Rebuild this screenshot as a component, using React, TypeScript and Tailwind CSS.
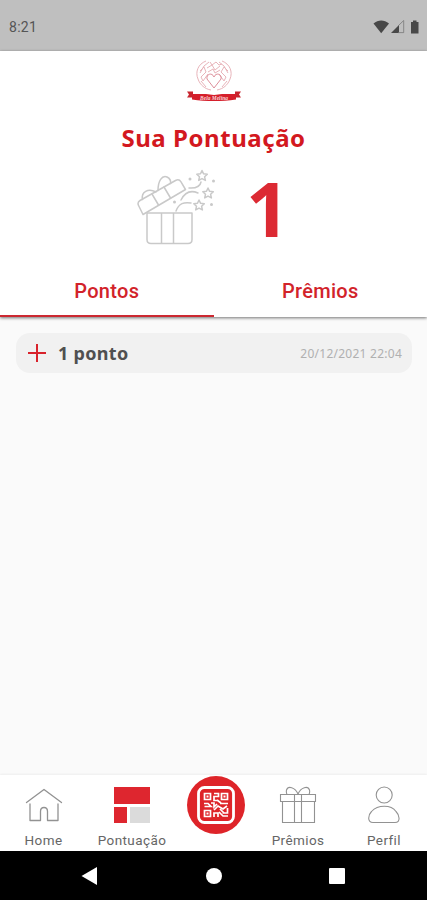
import React, { useState } from 'react';

const tabs = ['Pontos', 'Prêmios'];

const entries = [{ id: 1, label: '1 ponto', date: '20/12/2021 22:04' }];

function StatusBar() {
  return (
    <div className="h-[51px] bg-[#bfbfbf] flex items-center justify-between pl-[9px] pr-[6px] pt-[3px] text-[#555]">
      <span className="text-[14px] tracking-[0.3px] font-[Roboto,sans-serif]">8:21</span>
      <svg width="48" height="16" viewBox="0 0 48 16" fill="#484848">
        <path d="M0.5 4.6C5.2 0.6 11.2 0.6 16 4.6L8.2 14.2z" />
        <path d="M18 14L26 6V14z" />
        <path d="M25 7L30.700 1.500V13.600H25" fill="none" stroke="#777" strokeWidth="0.8" />
        <path d="M38 3h2V1.500h3.500V3h2v11.500H38z" />
      </svg>
    </div>
  );
}

function Logo() {
  return (
    <svg className="mt-[7px]" width="58" height="45" viewBox="0 0 58 45" fill="none">
      <g stroke="#e8b4ba" strokeWidth="1">
        <path d="M21 3C13 6 10 14 13 21C15 27 20 31 26 32" />
        <path d="M37 3C45 6 48 14 45 21C43 27 38 31 32 32" />
        <path d="M24 4l-5 4-4 7M34 4l5 4 4 7M25 4l2 3 4-3 3 3 3-1" />
        <path d="M15 13l4-4 2 5-5 5 2 4 5-7M43 13l-4-4-3 5 5 5-2 4-5-7" />
        <path d="M22 10l5-3 3 5 5-4M23 14l5-3 2 4 5-3M16 23l5 6M42 23l-5 6" />
      </g>
      <path d="M29 19C27 14 21 16 22 21L29 30L36 21C37 16 31 14 29 19z" stroke="#dd8f9a" />
      <path d="M2 33.500h6v6H2l2-3zM56 33.500h-6v6h6l-2-3z" fill="#c8252e" />
      <path d="M7 36h14l8 1 8-1h14v5.500C44 42.500 36 43 29 43S14 42.500 7 41.500z" fill="#d51f2b" />
      <text x="29" y="41.500" textAnchor="middle" fill="#f9d6d8" className="text-[5.5px] italic font-bold font-[Liberation_Serif,serif]">Bela Melina</text>
    </svg>
  );
}

function OpenGift() {
  return (
    <svg width="80" height="80" viewBox="0 0 80 80" fill="none" stroke="#c9c9c9" strokeWidth="1.5" strokeLinejoin="round" strokeLinecap="round">
      <path d="M11 45h45v26.500q0 4-4 4H15q-4 0-4-4zM25.500 45v30.500M37.500 45v30.500" />
      <path d="M2.800 38Q0.800 34.500 4 32.500L39.500 12.500Q43 10.500 45 13.800L49.500 21.500L7 46.500z" />
      <path d="M16 26L22.500 37M28 19L34.500 30" />
      <path d="M6.500 31.500C5 24 12 20 20 24M22 22.500C22 13 26 7 31 9C35 11 35 13 34.500 15.500" />
      <path d="M40 43C43 35 48 34 55 35M45 32C49 24 55 22 62 25M53 20C60 20.500 64 19 65 14" />
      <path d="M66 2.500l1.600 3.300 3.700.5-2.700 2.500.8 3.600-3.400-1.800-3.300 1.800.8-3.600-2.700-2.500 3.700-.5z" />
      <path d="M72 20l1.600 3.300 3.700.5-2.700 2.500.8 3.600-3.400-1.800-3.300 1.800.8-3.600-2.700-2.500 3.700-.5z" />
      <path d="M63 32l1.600 3.300 3.700.5-2.700 2.500.8 3.600-3.400-1.800-3.300 1.800.8-3.600-2.700-2.500 3.700-.5z" />
      <g fill="#c9c9c9" stroke="none">
        <circle cx="54" cy="11" r="1.500" />
        <circle cx="77.500" cy="13" r="1.500" />
        <circle cx="38.500" cy="34" r="1.500" />
        <circle cx="75.500" cy="36.500" r="1.500" />
      </g>
    </svg>
  );
}

function HomeIcon() {
  return (
    <svg width="38" height="38" viewBox="0 0 38 38" fill="none" stroke="#929292" strokeWidth="1.300" strokeLinejoin="round" strokeLinecap="round">
      <path d="M1.500 16.500L19 3.500L36.500 16.500" />
      <path d="M5 18v16.500h10.500V25.500q0-4 3.500-4t3.500 4v9H33V18" />
    </svg>
  );
}

function PointsIcon() {
  return (
    <div className="w-9 h-9 grid grid-cols-[13px_20px] grid-rows-[17px_16px] gap-[3px]">
      <div className="col-span-2 bg-[#de262f]" />
      <div className="bg-[#de262f]" />
      <div className="bg-[#dbdbdb]" />
    </div>
  );
}

function GiftIcon() {
  return (
    <svg width="38" height="38" viewBox="0 0 38 38" fill="none" stroke="#929292" strokeWidth="1.100">
      <path d="M1.500 8.500h35v7h-35zM3.500 15.500v21h32v-21M15.500 8.500v28M22.500 8.500v28" />
      <path d="M19 8C16 1 9 -0.500 7.500 4Q7 6.500 8 8.500M19 8C22 1 29 -0.500 30.500 4Q31 6.500 30 8.500" />
    </svg>
  );
}

function ProfileIcon() {
  return (
    <svg width="38" height="38" viewBox="0 0 38 38" fill="none" stroke="#929292" strokeWidth="1.100">
      <circle cx="19.200" cy="9" r="8" />
      <path d="M8 36.500C2 36.500 3 29 6.500 25.500C13 18.500 26 18.500 31 25.500C34.500 29 36 36.500 30 36.500z" />
    </svg>
  );
}

function QrButton() {
  return (
    <button className="w-[58px] h-[58px] rounded-full bg-[#de2429] flex items-center justify-center">
      <svg width="38" height="38" viewBox="0 0 38 38" fill="none" stroke="#fff">
        <rect x="1.500" y="1.500" width="35" height="35" rx="6" strokeWidth="2.800" />
        <g strokeWidth="1.700">
          <path d="M7.500 7.500h6v6h-6zM24.500 7.500h6v6h-6zM7.500 24.500h6v6h-6z" />
          <path d="M17 7.500h4.500v3H17v4h4.500M7 17.500h4l3 3H7.500M14 17h3v4l3-3M23 17.500h3l5 0M17 24l4-4 5 3 4-3M17 31v-4h4v4M22 26l4 4h5M30.500 22v5h-5M20 14l4 3M23 23l4 4" />
        </g>
        <path d="M9.500 9.500h2v2h-2zM26.500 9.500h2v2h-2zM9.500 26.500h2v2h-2z" fill="#fff" stroke="none" />
      </svg>
    </button>
  );
}

function NavItem({ label, className, children }: { label: string; className: string; children: React.ReactNode }) {
  return (
    <button className={`flex flex-col items-center pt-[11px] ${className}`}>
      <div className="h-[38px] flex items-center">{children}</div>
      <span className="mt-[7px] text-[13.5px] leading-[18px] tracking-[0.4px] text-[#666]">{label}</span>
    </button>
  );
}

export default function App() {
  const [activeTab, setActiveTab] = useState(0);

  return (
    <div className="w-[427px] h-[900px] flex flex-col bg-[#fafafa] overflow-hidden font-['Noto_Sans',sans-serif]">
      <StatusBar />

      <header className="h-[266px] shrink-0 bg-white flex flex-col items-center shadow-[0_1px_3px_rgba(0,0,0,0.55)]">
        <Logo />
        <h1 className="mt-[18px] text-[24px] leading-[34px] font-bold tracking-[0.55px] text-[#d31820]">Sua Pontuação</h1>
        <div className="mt-[13px] h-[80px] w-full flex items-center pl-[136px]">
          <OpenGift />
          <span className="ml-[30px] text-[76px] leading-[80px] font-bold text-[#dc2a33]">1</span>
        </div>
        <div className="mt-auto w-full h-[52px] flex">
          {tabs.map((tab, i) => (
            <button
              key={tab}
              onClick={() => setActiveTab(i)}
              className={`flex-1 border-b-[2px] pt-[2px] text-[20px] font-medium tracking-[0.3px] text-[#d2232a] font-[Roboto,sans-serif] ${activeTab === i ? 'border-[#cc2831]' : 'border-transparent'}`}
            >
              {tab}
            </button>
          ))}
        </div>
      </header>

      <main className="flex-1 px-4 pt-[16px]">
        {entries.map(entry => (
          <div key={entry.id} className="h-[40px] mr-[-1px] rounded-[14px] bg-[#f1f1f1] flex items-center pl-[11px] pr-[10px]">
            <svg width="20" height="20" viewBox="0 0 20 20" stroke="#d8232c" strokeWidth="2">
              <path d="M1 10h18M10 1v18" />
            </svg>
            <span className="ml-[11px] text-[18px] font-bold tracking-[0.3px] text-[#505050]">{entry.label}</span>
            <span className="ml-auto pt-[2px] text-[12px] tracking-[0.25px] text-[#b0b0b0]">{entry.date}</span>
          </div>
        ))}
      </main>

      <nav className="h-[76px] shrink-0 bg-white flex shadow-[0_-1px_2px_rgba(0,0,0,0.05)] font-[Roboto,sans-serif]">
        <NavItem label="Home" className="w-[87px]"><HomeIcon /></NavItem>
        <NavItem label="Pontuação" className="w-[90px]"><PointsIcon /></NavItem>
        <div className="w-[78px] flex justify-center items-start pt-[1px]"><QrButton /></div>
        <NavItem label="Prêmios" className="w-[86px]"><GiftIcon /></NavItem>
        <NavItem label="Perfil" className="w-[86px]"><ProfileIcon /></NavItem>
      </nav>

      <div className="h-[49px] shrink-0 bg-black flex items-center pl-[81px]">
        <svg width="16" height="18" viewBox="0 0 16 18" fill="#fff"><path d="M0.500 9L16 0v18z" /></svg>
        <div className="ml-[109px] w-4 h-4 rounded-full bg-white" />
        <div className="ml-[107px] w-4 h-4 rounded-[1px] bg-white" />
      </div>
    </div>
  );
}
